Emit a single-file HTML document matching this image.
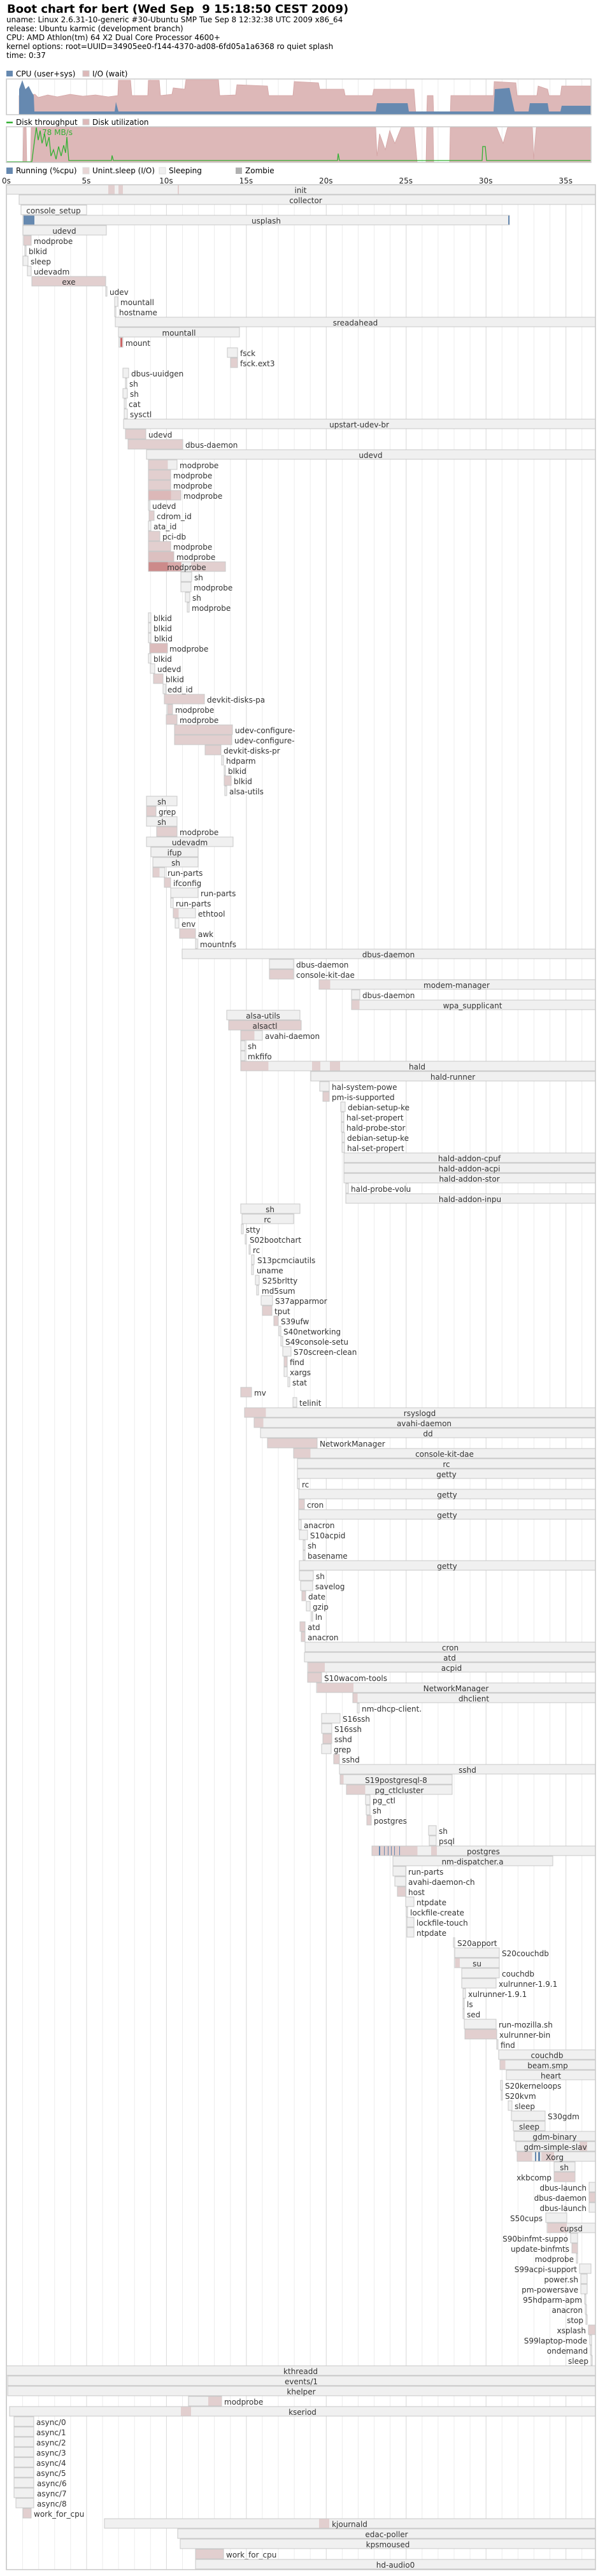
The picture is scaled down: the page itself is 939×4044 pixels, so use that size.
<!DOCTYPE html>
<html><head><meta charset="utf-8"><style>
html,body{margin:0;padding:0;background:#fff;width:939px;height:4044px;overflow:hidden}
svg{display:block}
text{font-family:"DejaVu Sans","Liberation Sans",sans-serif;font-size:12px;fill:#222}
.pr rect{fill:#f0f0f0;stroke:#c8c8c8;stroke-width:1}
.pr rect.p{fill:#e2cfcf}
.pr rect.d{fill:#d8a8a8;stroke:none}
.pr rect.o{fill:#e2cfcf;stroke:none}
.pr rect.b{fill:#6689b0;stroke:none}
.pr text{fill:#333}
.c{text-anchor:middle}.l{text-anchor:end}
</style></head><body>
<svg width="939" height="4044" viewBox="0 0 939 4044" xmlns="http://www.w3.org/2000/svg">
<defs>
<pattern id="g1" x="10" y="0" width="25.09" height="10" patternUnits="userSpaceOnUse"><rect x="0" y="0" width="1" height="10" fill="#ececec"/></pattern>
<pattern id="g5" x="10" y="0" width="125.45" height="10" patternUnits="userSpaceOnUse"><rect x="0" y="0" width="1" height="10" fill="#dcdcdc"/></pattern>
</defs>
<text x="11" y="20" style="font-size:18px;font-weight:bold;fill:#000">Boot chart for bert (Wed Sep&#160; 9 15:18:50 CEST 2009)</text>
<text x="10" y="35" style="fill:#000">uname: Linux 2.6.31-10-generic #30-Ubuntu SMP Tue Sep 8 12:32:38 UTC 2009 x86_64</text>
<text x="10" y="49" style="fill:#000">release: Ubuntu karmic (development branch)</text>
<text x="10" y="63" style="fill:#000">CPU: AMD Athlon(tm) 64 X2 Dual Core Processor 4600+</text>
<text x="10" y="77" style="fill:#000">kernel options: root=UUID=34905ee0-f144-4370-ad08-6fd05a1a6368 ro quiet splash</text>
<text x="10" y="91" style="fill:#000">time: 0:37</text>

<rect x="10" y="111" width="10" height="9" fill="#6689b0"/>
<text x="25" y="120" style="fill:#000">CPU (user+sys)</text>
<rect x="130" y="111" width="10" height="9" fill="#ddb8b8" stroke="#ccc"/>
<text x="145" y="120" style="fill:#000">I/O (wait)</text>

<rect x="10" y="124" width="918" height="56" fill="url(#g1)"/>
<rect x="10" y="124" width="918" height="56" fill="url(#g5)"/>
<path d="M30,180 L30,150 L55,148 L60,153 L75,149 L90,152 L110,148 L130,151 L150,149 L170,152 L185,150 L186,126 L205,126 L207,150 L232,150 L233,126 L250,126 L252,150 L270,148 L272,138 L290,140 L292,125 L343,125 L345,150 L370,149 L372,133 L420,135 L422,150 L460,150 L462,128 L500,130 L502,140 L540,140 L542,150 L585,150 L587,140 L650,140 L653,180 L670,180 L671,150 L680,150 L681,180 L707,180 L708,150 L775,150 L776,128 L810,130 L812,150 L843,150 L845,135 L860,140 L862,150 L880,150 L882,135 L928,135 L928,180 Z" fill="#ddb8b8" stroke="#d3a3a3" stroke-width="0.8"/>
<path d="M30,180 L30,140 L35,126 L40,140 L45,135 L50,145 L53,150 L54,175 L180,175 L182,160 L186,175 L590,175 L592,162 L640,162 L642,175 L775,175 L777,140 L800,138 L808,175 L830,175 L832,162 L860,162 L862,175 L880,175 L882,166 L928,166 L928,180 Z" fill="#6689b0"/>
<rect x="10" y="124" width="918" height="56" fill="none" stroke="#ccc" stroke-width="1.5"/>

<rect x="10" y="191" width="10" height="2.5" fill="#33b033"/>
<text x="25" y="196" style="fill:#000">Disk throughput</text>
<rect x="130" y="187" width="10" height="9" fill="#ddb8b8" stroke="#ccc"/>
<text x="145" y="196" style="fill:#000">Disk utilization</text>

<rect x="10" y="199" width="918" height="56" fill="url(#g1)"/>
<rect x="10" y="199" width="918" height="56" fill="url(#g5)"/>
<path d="M36,255 L37,200 L41,200 L42,255 L48,255 L49,200 L590,200 L592,245 L596,210 L605,235 L612,205 L620,225 L630,200 L650,200 L655,255 L669,255 L670,200 L680,200 L681,255 L706,255 L707,200 L780,200 L790,225 L797,200 L836,200 L838,250 L842,200 L928,200 L928,255 Z" fill="#ddb8b8" stroke="#d3a3a3" stroke-width="0.8"/>
<path d="M10,254 L50,254 L53,230 L57,200 L60,220 L63,205 L66,225 L70,210 L73,230 L77,215 L80,245 L84,235 L88,250 L92,230 L96,245 L100,228 L103,240 L105,215 L108,252 L175,252 L176,244 L178,252 L530,252 L531,241 L533,252 L757,252 L758,230 L762,230 L764,252 L928,252" fill="none" stroke="#33b033" stroke-width="1.3"/>
<rect x="10" y="199" width="918" height="56" fill="none" stroke="#ccc" stroke-width="1.5"/>
<text x="66" y="212" style="fill:#33b033">78 MB/s</text>

<rect x="10" y="263" width="10" height="10" fill="#6689b0"/>
<text x="25" y="272" style="fill:#000">Running (%cpu)</text>
<rect x="130" y="263" width="10" height="10" fill="#e8d5d5" stroke="#ddd"/>
<text x="145" y="272" style="fill:#000">Unint.sleep (I/O)</text>
<rect x="250" y="263" width="10" height="10" fill="#f0f0f0" stroke="#ddd"/>
<text x="265" y="272" style="fill:#000">Sleeping</text>
<rect x="370" y="263" width="10" height="10" fill="#b0b0b0"/>
<text x="385" y="272" style="fill:#000">Zombie</text>

<g style="fill:#000">
<text x="10" y="288" class="c">0s</text><text x="135.5" y="288" class="c">5s</text><text x="260.9" y="288" class="c">10s</text><text x="386.4" y="288" class="c">15s</text><text x="511.8" y="288" class="c">20s</text><text x="637.3" y="288" class="c">25s</text><text x="762.7" y="288" class="c">30s</text><text x="888.2" y="288" class="c">35s</text>
</g>

<rect x="10" y="290" width="925" height="3744" fill="url(#g1)"/>
<rect x="10" y="290" width="925" height="3744" fill="url(#g5)"/>

<g class="pr">
<rect x="10" y="290" width="925" height="15"/><rect class="o" x="170" y="290.5" width="10" height="14"/><rect class="o" x="186" y="290.5" width="7" height="14"/><rect class="o" x="279" y="290.5" width="2" height="14"/><text x="472" y="303" class="c">init</text>
<rect x="30" y="306" width="905" height="15"/><text x="480" y="319" class="c">collector</text>
<rect x="33" y="322" width="103" height="15" style="fill:#fafafa"/><text x="84" y="335" class="c">console_setup</text>
<rect x="36" y="338" width="764" height="15"/><rect class="b" x="37" y="338.5" width="17" height="14"/><rect class="b" x="798" y="338.5" width="2" height="14"/><text x="418" y="351" class="c">usplash</text>
<rect x="36" y="354" width="131" height="15"/><text x="101" y="367" class="c">udevd</text>
<rect class="p" x="37" y="370" width="12" height="15"/><text x="53" y="383">modprobe</text>
<rect x="39" y="386" width="2" height="15"/><text x="45" y="399">blkid</text>
<rect x="36" y="402" width="8" height="15"/><text x="48" y="415">sleep</text>
<rect x="43" y="418" width="6" height="15"/><text x="53" y="431">udevadm</text>
<rect class="p" x="50" y="434" width="116" height="15"/><text x="108" y="447" class="c">exe</text>
<rect x="166" y="450" width="2" height="15"/><text x="172" y="463">udev</text>
<rect x="180" y="466" width="5" height="15"/><text x="189" y="479">mountall</text>
<rect x="180" y="482" width="2" height="15"/><text x="187" y="495">hostname</text>
<rect x="181" y="498" width="754" height="15"/><text x="558" y="511" class="c">sreadahead</text>
<rect x="186" y="514" width="190" height="15"/><text x="281" y="527" class="c">mountall</text>
<rect x="187" y="530" width="6" height="15"/><rect class="d" x="189" y="530.5" width="3" height="14" style="fill:#cc6666"/><text x="197" y="543">mount</text>
<rect x="357" y="546" width="16" height="15"/><text x="377" y="559">fsck</text>
<rect class="p" x="362" y="562" width="11" height="15"/><text x="377" y="575">fsck.ext3</text>
<rect x="193" y="578" width="9" height="15"/><text x="206" y="591">dbus-uuidgen</text>
<rect x="197" y="594" width="2" height="15"/><text x="203" y="607">sh</text>
<rect x="193" y="610" width="7" height="15"/><text x="204" y="623">sh</text>
<rect x="195" y="626" width="3" height="15"/><text x="202" y="639">cat</text>
<rect x="195" y="642" width="5" height="15"/><text x="204" y="655">sysctl</text>
<rect x="194" y="658" width="741" height="15"/><text x="564" y="671" class="c">upstart-udev-br</text>
<rect class="p" x="197" y="674" width="32" height="15"/><text x="233" y="687">udevd</text>
<rect class="p" x="201" y="690" width="86" height="15"/><text x="291" y="703">dbus-daemon</text>
<rect x="230" y="706" width="705" height="15"/><text x="582" y="719" class="c">udevd</text>
<rect x="233" y="722" width="45" height="15"/><rect class="o" x="233.5" y="722.5" width="30" height="14"/><text x="282" y="735">modprobe</text>
<rect class="p" x="233" y="738" width="35" height="15"/><text x="272" y="751">modprobe</text>
<rect class="p" x="233" y="754" width="35" height="15"/><text x="272" y="767">modprobe</text>
<rect class="p" x="233" y="770" width="51" height="15"/><rect class="d" x="233.5" y="770.5" width="35" height="14" style="fill:#dcb8b8"/><text x="288" y="783">modprobe</text>
<rect x="233" y="786" width="2" height="15"/><text x="239" y="799">udevd</text>
<rect class="p" x="234" y="802" width="8" height="15"/><text x="246" y="815">cdrom_id</text>
<rect x="233" y="818" width="4" height="15"/><text x="241" y="831">ata_id</text>
<rect class="p" x="233" y="834" width="18" height="15"/><text x="255" y="847">pci-db</text>
<rect class="p" x="233" y="850" width="35" height="15"/><text x="272" y="863">modprobe</text>
<rect class="p" x="233" y="866" width="40" height="15" style="fill:#dcc0c0"/><text x="277" y="879">modprobe</text>
<rect class="p" x="233" y="882" width="121" height="15"/><rect class="d" x="233.5" y="882.5" width="30" height="14" style="fill:#cc8a8a"/><rect class="d" x="263.5" y="882.5" width="21" height="14"/><rect x="285" y="882.5" width="15" height="14" style="fill:#f0f0f0;stroke:none"/><text x="293" y="895" class="c">modprobe</text>
<rect x="284" y="898" width="17" height="15"/><text x="305" y="911">sh</text>
<rect x="284" y="914" width="16" height="15"/><text x="304" y="927">modprobe</text>
<rect x="291" y="930" width="7" height="15"/><text x="302" y="943">sh</text>
<rect x="294" y="946" width="3" height="15"/><text x="301" y="959">modprobe</text>
<rect x="233" y="962" width="4" height="15"/><text x="241" y="975">blkid</text>
<rect x="233" y="978" width="4" height="15"/><text x="241" y="991">blkid</text>
<rect x="233" y="994" width="4" height="15"/><text x="242" y="1007">blkid</text>
<rect class="p" x="235" y="1010" width="28" height="15" style="fill:#dcbcbc"/><text x="266" y="1023">modprobe</text>
<rect x="233" y="1026" width="4" height="15"/><text x="241" y="1039">blkid</text>
<rect x="236" y="1042" width="7" height="15"/><text x="247" y="1055">udevd</text>
<rect class="p" x="241" y="1058" width="15" height="15"/><text x="260" y="1071">blkid</text>
<rect x="256" y="1074" width="4" height="15"/><text x="263" y="1087">edd_id</text>
<rect class="p" x="258" y="1090" width="63" height="15"/><text x="325" y="1103">devkit-disks-pa</text>
<rect class="p" x="263" y="1106" width="8" height="15"/><text x="275" y="1119">modprobe</text>
<rect class="p" x="261" y="1122" width="17" height="15"/><text x="282" y="1135">modprobe</text>
<rect class="p" x="274" y="1138" width="91" height="15"/><text x="369" y="1151">udev-configure-</text>
<rect class="p" x="274" y="1154" width="90" height="15"/><text x="368" y="1167">udev-configure-</text>
<rect class="p" x="322" y="1170" width="25" height="15"/><text x="351" y="1183">devkit-disks-pr</text>
<rect x="348" y="1186" width="3" height="15"/><text x="355" y="1199">hdparm</text>
<rect x="352" y="1202" width="2" height="15"/><text x="358" y="1215">blkid</text>
<rect class="p" x="352" y="1218" width="11" height="15"/><text x="367" y="1231">blkid</text>
<rect x="353" y="1234" width="3" height="15"/><text x="360" y="1247">alsa-utils</text>
<rect x="230" y="1250" width="48" height="15"/><text x="254" y="1263" class="c">sh</text>
<rect class="p" x="230" y="1266" width="15" height="15"/><text x="249" y="1279">grep</text>
<rect x="230" y="1282" width="48" height="15"/><text x="254" y="1295" class="c">sh</text>
<rect class="p" x="246" y="1298" width="32" height="15"/><text x="282" y="1311">modprobe</text>
<rect x="230" y="1314" width="136" height="15"/><text x="298" y="1327" class="c">udevadm</text>
<rect x="237" y="1330" width="74" height="15"/><text x="274" y="1343" class="c">ifup</text>
<rect x="240" y="1346" width="71" height="15"/><text x="276" y="1359" class="c">sh</text>
<rect x="240" y="1362" width="19" height="15"/><rect class="o" x="240.5" y="1362.5" width="10" height="14"/><text x="263" y="1375">run-parts</text>
<rect class="p" x="258" y="1378" width="10" height="15"/><text x="272" y="1391">ifconfig</text>
<rect x="268" y="1394" width="43" height="15"/><text x="315" y="1407">run-parts</text>
<rect x="268" y="1410" width="4" height="15"/><text x="276" y="1423">run-parts</text>
<rect x="272" y="1426" width="35" height="15"/><rect class="o" x="272.5" y="1426.5" width="8" height="14"/><text x="311" y="1439">ethtool</text>
<rect x="275" y="1442" width="6" height="15"/><text x="285" y="1455">env</text>
<rect class="p" x="282" y="1458" width="25" height="15"/><text x="311" y="1471">awk</text>
<rect x="307" y="1474" width="3" height="15"/><text x="314" y="1487">mountnfs</text>
<rect x="286" y="1490" width="649" height="15"/><text x="610" y="1503" class="c">dbus-daemon</text>
<rect x="423" y="1506" width="38" height="15"/><text x="465" y="1519">dbus-daemon</text>
<rect class="p" x="423" y="1522" width="38" height="15"/><text x="465" y="1535">console-kit-dae</text>
<rect x="501" y="1538" width="434" height="15"/><rect class="o" x="501.5" y="1538.5" width="17" height="14"/><text x="717" y="1551" class="c">modem-manager</text>
<rect x="552" y="1554" width="13" height="15"/><text x="569" y="1567">dbus-daemon</text>
<rect x="552" y="1570" width="383" height="15"/><rect class="o" x="552.5" y="1570.5" width="12" height="14"/><text x="742" y="1583" class="c">wpa_supplicant</text>
<rect x="356" y="1586" width="115" height="15"/><text x="413" y="1599" class="c">alsa-utils</text>
<rect class="p" x="359" y="1602" width="114" height="15"/><text x="416" y="1615" class="c">alsactl</text>
<rect x="378" y="1618" width="34" height="15"/><rect class="o" x="378.5" y="1618.5" width="21" height="14"/><text x="416" y="1631">avahi-daemon</text>
<rect x="378" y="1634" width="7" height="15"/><text x="389" y="1647">sh</text>
<rect x="378" y="1650" width="7" height="15"/><text x="389" y="1663">mkfifo</text>
<rect x="378" y="1666" width="557" height="15"/><rect class="o" x="378.5" y="1666.5" width="43" height="14"/><rect class="o" x="490" y="1666.5" width="13" height="14"/><rect class="o" x="518" y="1666.5" width="16" height="14"/><text x="655" y="1679" class="c">hald</text>
<rect x="488" y="1682" width="447" height="15"/><text x="711" y="1695" class="c">hald-runner</text>
<rect x="502" y="1698" width="15" height="15"/><text x="521" y="1711">hal-system-powe</text>
<rect class="p" x="507" y="1714" width="10" height="15"/><text x="521" y="1727">pm-is-supported</text>
<rect x="535" y="1730" width="7" height="15"/><text x="546" y="1743">debian-setup-ke</text>
<rect x="536" y="1746" width="4" height="15"/><text x="544" y="1759">hal-set-propert</text>
<rect x="536" y="1762" width="4" height="15"/><text x="544" y="1775">hald-probe-stor</text>
<rect x="537" y="1778" width="4" height="15"/><text x="545" y="1791">debian-setup-ke</text>
<rect x="537" y="1794" width="4" height="15"/><text x="545" y="1807">hal-set-propert</text>
<rect x="540" y="1810" width="395" height="15"/><text x="737" y="1823" class="c">hald-addon-cpuf</text>
<rect x="540" y="1826" width="395" height="15"/><text x="737" y="1839" class="c">hald-addon-acpi</text>
<rect x="540" y="1842" width="395" height="15"/><text x="737" y="1855" class="c">hald-addon-stor</text>
<rect x="543" y="1858" width="4" height="15"/><text x="551" y="1871">hald-probe-volu</text>
<rect x="543" y="1874" width="392" height="15"/><text x="738" y="1887" class="c">hald-addon-inpu</text>
<rect x="378" y="1890" width="93" height="15"/><text x="424" y="1903" class="c">sh</text>
<rect x="380" y="1906" width="81" height="15"/><text x="420" y="1919" class="c">rc</text>
<rect x="379" y="1922" width="3" height="15"/><text x="386" y="1935">stty</text>
<rect x="385" y="1938" width="2" height="15"/><text x="392" y="1951">S02bootchart</text>
<rect x="391" y="1954" width="2" height="15"/><text x="397" y="1967">rc</text>
<rect x="395" y="1970" width="4" height="15"/><text x="404" y="1983">S13pcmciautils</text>
<rect x="395" y="1986" width="3" height="15"/><text x="403" y="1999">uname</text>
<rect x="401" y="2002" width="6" height="15"/><text x="412" y="2015">S25brltty</text>
<rect x="403" y="2018" width="3" height="15"/><text x="411" y="2031">md5sum</text>
<rect x="410" y="2034" width="18" height="15"/><text x="432" y="2047">S37apparmor</text>
<rect class="p" x="412" y="2050" width="15" height="15"/><text x="431" y="2063">tput</text>
<rect class="p" x="430" y="2066" width="7" height="15"/><text x="441" y="2079">S39ufw</text>
<rect x="438" y="2082" width="3" height="15"/><text x="445" y="2095">S40networking</text>
<rect x="441" y="2098" width="3" height="15"/><text x="448" y="2111">S49console-setu</text>
<rect x="444" y="2114" width="13" height="15"/><text x="461" y="2127">S70screen-clean</text>
<rect class="p" x="446" y="2130" width="5" height="15"/><text x="455" y="2143">find</text>
<rect x="446" y="2146" width="5" height="15"/><text x="455" y="2159">xargs</text>
<rect x="452" y="2162" width="3" height="15"/><text x="459" y="2175">stat</text>
<rect class="p" x="378" y="2178" width="17" height="15"/><text x="399" y="2191">mv</text>
<rect x="460" y="2194" width="6" height="15"/><text x="470" y="2207">telinit</text>
<rect x="384" y="2210" width="551" height="15"/><rect class="o" x="384.5" y="2210.5" width="33" height="14"/><text x="659" y="2223" class="c">rsyslogd</text>
<rect x="399" y="2226" width="536" height="15"/><rect class="o" x="399.5" y="2226.5" width="14" height="14"/><text x="666" y="2239" class="c">avahi-daemon</text>
<rect x="409" y="2242" width="526" height="15"/><text x="672" y="2255" class="c">dd</text>
<rect class="p" x="420" y="2258" width="78" height="15"/><text x="502" y="2271">NetworkManager</text>
<rect x="461" y="2274" width="474" height="15"/><rect class="o" x="461.5" y="2274.5" width="26" height="14"/><text x="698" y="2287" class="c">console-kit-dae</text>
<rect x="467" y="2290" width="468" height="15"/><text x="701" y="2303" class="c">rc</text>
<rect x="467" y="2306" width="468" height="15"/><text x="701" y="2319" class="c">getty</text>
<rect x="467" y="2322" width="3" height="15"/><text x="474" y="2335">rc</text>
<rect x="469" y="2338" width="466" height="15"/><text x="702" y="2351" class="c">getty</text>
<rect class="p" x="469" y="2354" width="9" height="15"/><text x="482" y="2367">cron</text>
<rect x="469" y="2370" width="466" height="15"/><text x="702" y="2383" class="c">getty</text>
<rect x="469" y="2386" width="4" height="15"/><text x="477" y="2399">anacron</text>
<rect x="470" y="2402" width="13" height="15"/><text x="487" y="2415">S10acpid</text>
<rect x="476" y="2418" width="3" height="15"/><text x="483" y="2431">sh</text>
<rect x="476" y="2434" width="3" height="15"/><text x="483" y="2447">basename</text>
<rect x="470" y="2450" width="465" height="15"/><text x="702" y="2463" class="c">getty</text>
<rect x="470" y="2466" width="22" height="15"/><text x="496" y="2479">sh</text>
<rect x="472" y="2482" width="19" height="15"/><text x="495" y="2495">savelog</text>
<rect class="p" x="474" y="2498" width="6" height="15"/><text x="484" y="2511">date</text>
<rect x="481" y="2514" width="6" height="15"/><text x="491" y="2527">gzip</text>
<rect x="489" y="2530" width="2" height="15"/><text x="495" y="2543">ln</text>
<rect class="p" x="471" y="2546" width="8" height="15"/><text x="483" y="2559">atd</text>
<rect class="p" x="473" y="2562" width="6" height="15"/><text x="483" y="2575">anacron</text>
<rect x="479" y="2578" width="456" height="15"/><text x="707" y="2591" class="c">cron</text>
<rect x="478" y="2594" width="457" height="15"/><text x="706" y="2607" class="c">atd</text>
<rect x="483" y="2610" width="452" height="15"/><rect class="o" x="484" y="2610.5" width="26" height="14"/><text x="709" y="2623" class="c">acpid</text>
<rect class="p" x="483" y="2626" width="22" height="15"/><text x="509" y="2639">S10wacom-tools</text>
<rect x="497" y="2642" width="438" height="15"/><rect class="o" x="498" y="2642.5" width="57" height="14"/><text x="716" y="2655" class="c">NetworkManager</text>
<rect x="554" y="2658" width="381" height="15"/><rect class="o" x="554.5" y="2658.5" width="7" height="14"/><text x="744" y="2671" class="c">dhclient</text>
<rect x="561" y="2674" width="3" height="15"/><text x="568" y="2687">nm-dhcp-client.</text>
<rect x="505" y="2690" width="29" height="15"/><text x="538" y="2703">S16ssh</text>
<rect x="505" y="2706" width="16" height="15"/><text x="525" y="2719">S16ssh</text>
<rect class="p" x="507" y="2722" width="14" height="15"/><text x="525" y="2735">sshd</text>
<rect x="505" y="2738" width="15" height="15"/><text x="524" y="2751">grep</text>
<rect class="p" x="524" y="2754" width="9" height="15"/><text x="537" y="2767">sshd</text>
<rect x="533" y="2770" width="402" height="15"/><text x="734" y="2783" class="c">sshd</text>
<rect x="534" y="2786" width="176" height="15"/><rect class="o" x="534.5" y="2786.5" width="5" height="14"/><text x="622" y="2799" class="c">S19postgresql-8</text>
<rect x="544" y="2802" width="166" height="15"/><rect class="o" x="544.5" y="2802.5" width="29" height="14"/><text x="627" y="2815" class="c">pg_ctlcluster</text>
<rect x="574" y="2818" width="7" height="15"/><text x="585" y="2831">pg_ctl</text>
<rect x="575" y="2834" width="6" height="15"/><text x="585" y="2847">sh</text>
<rect class="p" x="576" y="2850" width="7" height="15"/><text x="587" y="2863">postgres</text>
<rect x="673" y="2866" width="12" height="15"/><text x="689" y="2879">sh</text>
<rect x="674" y="2882" width="11" height="15"/><text x="689" y="2895">psql</text>
<rect x="584" y="2898" width="351" height="15"/><rect class="o" x="584.5" y="2898.5" width="71" height="14"/><rect class="o" x="677" y="2898.5" width="9" height="14"/><rect class="b" x="595" y="2898.5" width="2" height="14"/><rect class="b" x="603" y="2898.5" width="1" height="14"/><rect class="b" x="609" y="2898.5" width="1" height="14"/><rect class="b" x="614" y="2898.5" width="1" height="14"/><rect class="b" x="619" y="2898.5" width="1" height="14"/><rect class="b" x="627" y="2898.5" width="1" height="14"/><text x="759" y="2911" class="c">postgres</text>
<rect x="617" y="2914" width="251" height="15"/><text x="742" y="2927" class="c">nm-dispatcher.a</text>
<rect x="617" y="2930" width="20" height="15"/><text x="641" y="2943">run-parts</text>
<rect x="620" y="2946" width="17" height="15"/><text x="641" y="2959">avahi-daemon-ch</text>
<rect class="p" x="624" y="2962" width="13" height="15"/><text x="641" y="2975">host</text>
<rect x="637" y="2978" width="13" height="15"/><text x="654" y="2991">ntpdate</text>
<rect x="638" y="2994" width="2" height="15"/><text x="644" y="3007">lockfile-create</text>
<rect x="639" y="3010" width="11" height="15"/><text x="654" y="3023">lockfile-touch</text>
<rect x="639" y="3026" width="11" height="15"/><text x="654" y="3039">ntpdate</text>
<rect x="712" y="3042" width="2" height="15"/><text x="718" y="3055">S20apport</text>
<rect x="714" y="3058" width="70" height="15"/><text x="788" y="3071">S20couchdb</text>
<rect x="714" y="3074" width="70" height="15"/><rect class="o" x="715" y="3074.5" width="7" height="14"/><text x="749" y="3087" class="c">su</text>
<rect x="725" y="3090" width="59" height="15"/><text x="788" y="3103">couchdb</text>
<rect x="725" y="3106" width="54" height="15"/><text x="783" y="3119">xulrunner-1.9.1</text>
<rect x="727" y="3122" width="4" height="15"/><text x="735" y="3135">xulrunner-1.9.1</text>
<rect x="727" y="3138" width="2" height="15"/><text x="733" y="3151">ls</text>
<rect x="727" y="3154" width="2" height="15"/><text x="733" y="3167">sed</text>
<rect x="729" y="3170" width="50" height="15"/><text x="783" y="3183">run-mozilla.sh</text>
<rect class="p" x="730" y="3186" width="50" height="15"/><text x="784" y="3199">xulrunner-bin</text>
<rect x="780" y="3202" width="2" height="15"/><text x="786" y="3215">find</text>
<rect x="783" y="3218" width="152" height="15"/><text x="859" y="3231" class="c">couchdb</text>
<rect x="785" y="3234" width="150" height="15"/><rect class="o" x="785.5" y="3234.5" width="8" height="14"/><text x="860" y="3247" class="c">beam.smp</text>
<rect x="795" y="3250" width="140" height="15"/><text x="865" y="3263" class="c">heart</text>
<rect x="786" y="3266" width="3" height="15"/><text x="793" y="3279">S20kerneloops</text>
<rect x="787" y="3282" width="2" height="15"/><text x="793" y="3295">S20kvm</text>
<rect x="798" y="3298" width="6" height="15"/><text x="808" y="3311">sleep</text>
<rect x="803" y="3314" width="53" height="15"/><text x="860" y="3327">S30gdm</text>
<rect x="806" y="3330" width="50" height="15"/><text x="831" y="3343" class="c">sleep</text>
<rect x="807" y="3346" width="128" height="15"/><text x="871" y="3359" class="c">gdm-binary</text>
<rect x="810" y="3362" width="125" height="15"/><rect class="o" x="910" y="3362.5" width="12" height="14"/><text x="872" y="3375" class="c">gdm-simple-slav</text>
<rect x="812" y="3378" width="123" height="15"/><rect class="o" x="812.5" y="3378.5" width="23" height="14"/><rect class="o" x="850" y="3378.5" width="20" height="14"/><rect class="b" x="840" y="3378.5" width="2" height="14"/><rect class="b" x="845" y="3378.5" width="3" height="14"/><text x="871" y="3391" class="c">Xorg</text>
<rect x="870" y="3394" width="33" height="15"/><text x="886" y="3407" class="c">sh</text>
<rect class="p" x="870" y="3410" width="33" height="15"/><text x="866" y="3423" class="l">xkbcomp</text>
<rect x="925" y="3426" width="10" height="15"/><text x="921" y="3439" class="l">dbus-launch</text>
<rect class="p" x="925" y="3442" width="10" height="15"/><text x="921" y="3455" class="l">dbus-daemon</text>
<rect x="925" y="3458" width="10" height="15"/><text x="921" y="3471" class="l">dbus-launch</text>
<rect x="857" y="3474" width="33" height="15"/><text x="852" y="3487" class="l">S50cups</text>
<rect x="859" y="3490" width="76" height="15"/><rect class="o" x="860" y="3490.5" width="30" height="14"/><text x="897" y="3503" class="c">cupsd</text>
<rect x="896" y="3506" width="11" height="15"/><text x="892" y="3519" class="l">S90binfmt-suppo</text>
<rect class="p" x="898" y="3522" width="9" height="15"/><text x="894" y="3535" class="l">update-binfmts</text>
<rect x="905" y="3538" width="2" height="15"/><text x="901" y="3551" class="l">modprobe</text>
<rect x="910" y="3554" width="18" height="15"/><text x="906" y="3567" class="l">S99acpi-support</text>
<rect x="912" y="3570" width="10" height="15"/><text x="908" y="3583" class="l">power.sh</text>
<rect x="912" y="3586" width="10" height="15"/><text x="908" y="3599" class="l">pm-powersave</text>
<rect x="918" y="3602" width="2" height="15"/><text x="914" y="3615" class="l">95hdparm-apm</text>
<rect x="919" y="3618" width="2" height="15"/><text x="915" y="3631" class="l">anacron</text>
<rect x="920" y="3634" width="2" height="15"/><text x="916" y="3647" class="l">stop</text>
<rect class="p" x="924" y="3650" width="11" height="15"/><text x="920" y="3663" class="l">xsplash</text>
<rect x="926" y="3666" width="3" height="15"/><text x="922" y="3679" class="l">S99laptop-mode</text>
<rect x="927" y="3682" width="2" height="15"/><text x="923" y="3695" class="l">ondemand</text>
<rect x="928" y="3698" width="2" height="15"/><text x="924" y="3711" class="l">sleep</text>
<rect x="10" y="3714" width="925" height="15"/><text x="472" y="3727" class="c">kthreadd</text>
<rect x="12" y="3730" width="923" height="15"/><text x="473" y="3743" class="c">events/1</text>
<rect x="12" y="3746" width="923" height="15"/><text x="473" y="3759" class="c">khelper</text>
<rect x="296" y="3762" width="52" height="15"/><rect class="o" x="327" y="3762.5" width="21" height="14"/><text x="352" y="3775">modprobe</text>
<rect x="15" y="3778" width="920" height="15"/><rect class="o" x="284" y="3778.5" width="16" height="14"/><text x="475" y="3791" class="c">kseriod</text>
<rect x="22" y="3794" width="31" height="15"/><text x="57" y="3807">async/0</text>
<rect x="22" y="3810" width="31" height="15"/><text x="57" y="3823">async/1</text>
<rect x="22" y="3826" width="31" height="15"/><text x="57" y="3839">async/2</text>
<rect x="22" y="3842" width="31" height="15"/><text x="57" y="3855">async/3</text>
<rect x="22" y="3858" width="31" height="15"/><text x="57" y="3871">async/4</text>
<rect x="22" y="3874" width="31" height="15"/><text x="57" y="3887">async/5</text>
<rect x="22" y="3890" width="31" height="15"/><text x="58" y="3903">async/6</text>
<rect x="22" y="3906" width="31" height="15"/><text x="58" y="3919">async/7</text>
<rect x="25" y="3922" width="28" height="15"/><text x="58" y="3935">async/8</text>
<rect class="p" x="36" y="3938" width="13" height="15"/><text x="53" y="3951">work_for_cpu</text>
<rect x="164" y="3954" width="771" height="15"/><rect class="o" x="501" y="3954.5" width="16" height="14"/><text x="549" y="3967" class="c">kjournald</text>
<rect x="279" y="3970" width="656" height="15"/><text x="607" y="3983" class="c">edac-poller</text>
<rect x="283" y="3986" width="652" height="15"/><text x="609" y="3999" class="c">kpsmoused</text>
<rect class="p" x="307" y="4002" width="44" height="15"/><text x="355" y="4015">work_for_cpu</text>
<rect x="307" y="4018" width="628" height="15"/><text x="621" y="4031" class="c">hd-audio0</text>
</g>
<rect x="10" y="290" width="925" height="3744" fill="none" stroke="#c8c8c8" stroke-width="1.5"/>
</svg>
</body></html>
